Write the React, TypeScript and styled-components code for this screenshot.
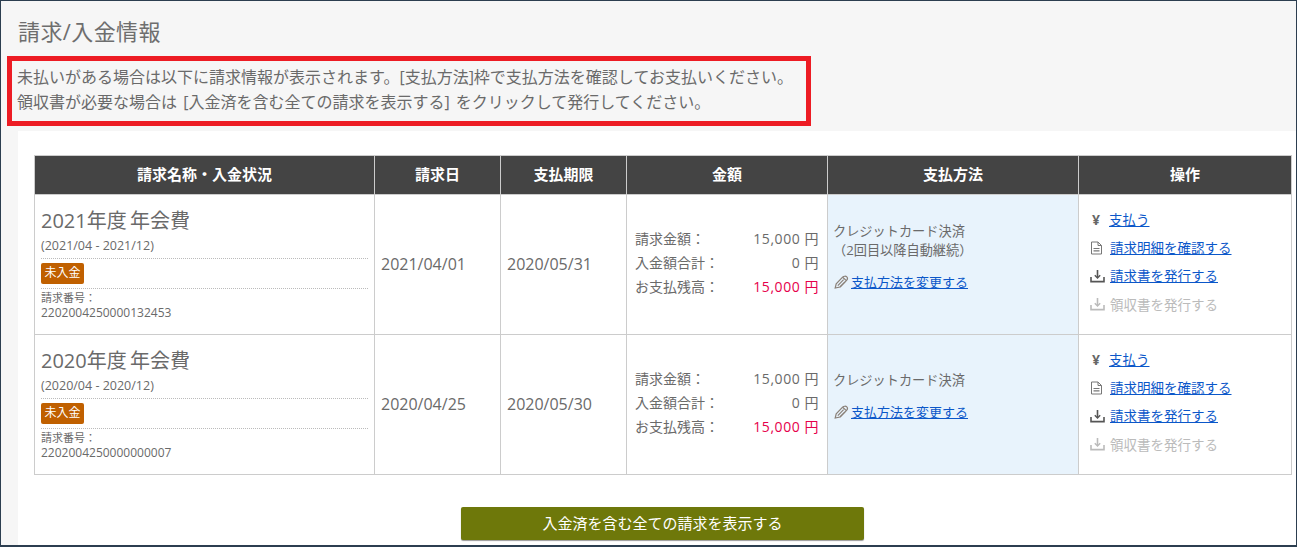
import React from "react";
import styled, { createGlobalStyle } from "styled-components";

const Global = createGlobalStyle`
  html, body { margin: 0; padding: 0; background: #f6f6f6; }
  body { font-family: "Open Sans", "Noto Sans CJK JP", sans-serif; color: #666; overflow: hidden; }
  * { box-sizing: border-box; }
`;

const Frame = styled.div`
  width: 1297px;
  height: 547px;
  border: 1px solid #2c3e50;
  border-bottom-width: 2px;
  background: #f6f6f6;
  overflow: hidden;
`;
const Title = styled.h1`
  margin: 0;
  padding: 15px 0 0 17px;
  height: 55px;
  font-size: 22px;
  line-height: 30px;
  letter-spacing: 0.4px;
  font-weight: 400;
  color: #6e6e6e;
`;
const Notice = styled.div`
  margin-left: 6px;
  width: 804px;
  height: 70px;
  border: 5px solid #ed1c24;
  padding: 4px 5px;
  font-size: 16px;
  line-height: 25px;
  word-spacing: 2px;
  color: #6a6a6a;
  white-space: nowrap;
`;
const Panel = styled.main`
  margin: 5px 0 0 17px;
  background: #fff;
  padding: 24px 4px 0 16px;
  height: 420px;
`;
const Table = styled.table`
  width: 1258px;
  table-layout: fixed;
  border-collapse: collapse;
  font-size: 16px;
`;
const Th = styled.th<{ $w: number }>`
  width: ${(p) => p.$w}px;
  height: 39px;
  background: #444;
  color: #fff;
  font-weight: 700;
  font-size: 15px;
  line-height: 35px;
  border: 1px solid #ccc;
  padding: 0 0 1px;
  text-align: center;
`;
const Td = styled.td<{ $blue?: boolean; $raised?: boolean }>`
  height: 140px;
  border: 1px solid #ccc;
  padding: 0 6px ${(p) => (p.$raised ? "2px" : "0")};
  vertical-align: middle;
  background: ${(p) => (p.$blue ? "#e8f3fc" : "#fff")};
  color: #6a6a6a;
`;
const BillName = styled.div`
  font-size: 20px;
  line-height: 26px;
  word-spacing: -2px;
`;
const Period = styled.div`
  font-size: 12.5px;
  line-height: 16px;
  margin-top: 4px;
  padding-bottom: 4px;
  border-bottom: 1px dotted #bbb;
`;
const StatusRow = styled.div`
  padding: 4px 0;
  line-height: 0;
  border-bottom: 1px dotted #bbb;
`;
const Badge = styled.span`
  display: inline-block;
  width: 43px;
  height: 21px;
  background: #c06000;
  color: #fff;
  font-size: 12px;
  line-height: 20px;
  text-align: center;
  border-radius: 2px;
`;
const BillNo = styled.div`
  font-size: 11px;
  line-height: 15px;
  margin-top: 1px;
`;
const BillNumber = styled.span`
  font-size: 12px;
`;
const Amounts = styled.dl`
  margin: 0;
  padding: 0 2px 4px;
  display: grid;
  grid-template-columns: 1fr auto;
  line-height: 24px;
  font-size: 14px;
`;
const Label = styled.dt`
  margin: 0;
`;
const Value = styled.dd<{ $due?: boolean }>`
  margin: 0;
  text-align: right;
  letter-spacing: 0.55px;
  color: ${(p) => (p.$due ? "#e6004c" : "#6a6a6a")};
`;
const Method = styled.div`
  margin-left: -1px;
  font-size: 13.2px;
  line-height: 19px;
`;
const MethodCell = styled.div`
  padding-bottom: 16px;
`;
const ChangeRow = styled.div`
  display: flex;
  align-items: center;
  gap: 2px;
  margin-top: 12px;
  font-size: 13px;
`;
const Link = styled.a`
  color: #0b57c9;
  text-decoration: underline;
  font-size: 13px;
  line-height: 20px;
`;
const OpLink = styled(Link)`
  font-size: 13.5px;
`;
const Ops = styled.ul`
  list-style: none;
  margin: 0;
  padding: 0 0 6px 5px;
  display: flex;
  flex-direction: column;
  gap: 8px;
`;
const Op = styled.li<{ $off?: boolean }>`
  display: flex;
  align-items: center;
  height: 20px;
  font-size: 13.5px;
  color: ${(p) => (p.$off ? "#bbb" : "#666")};
`;
const IconBox = styled.span`
  width: 20px;
  display: flex;
  align-items: center;
  justify-content: flex-start;
  flex: none;
`;
const Yen = styled.span`
  width: 19px;
  padding-left: 2px;
  flex: none;
  font-size: 14px;
  font-weight: 700;
`;
const Actions = styled.div`
  display: flex;
  justify-content: center;
  padding: 32px 1px 0 0;
`;
const Button = styled.button`
  width: 403px;
  height: 33px;
  padding: 0 0 2px;
  background: #6e780a;
  color: #fff;
  border: none;
  border-radius: 2px;
  box-shadow: 0 1px 1px rgba(0, 0, 0, 0.4);
  font-family: inherit;
  font-size: 15px;
`;

const Pencil = () => (
  <svg width="15" height="14" viewBox="0 0 15 14" fill="none" stroke="#8a8078" strokeWidth="1.2">
    <path d="M1.2 13 L2.2 8.8 L8.6 2.2 C9.8 1 11.8 0.9 12.8 1.9 C13.8 3 13.4 4.6 12.4 5.6 L6 12 Z" />
    <path d="M3.8 10.6 L9.6 4.6 M6 12 L11 6.8 M8.6 2.2 L12.4 5.6" />
  </svg>
);
const Doc = () => (
  <svg width="13" height="14" viewBox="0 0 13 14" fill="none" stroke="#777" strokeWidth="1">
    <path d="M1.5 1 H8 L11.5 4.5 V13 H1.5 Z" />
    <path d="M8 1 V4.5 H11.5" />
    <path d="M3.5 7.5 H9.5 M3.5 9.8 H9.5" strokeWidth="1.2" />
  </svg>
);
const Download = ({ off }: { off?: boolean }) => {
  const c = off ? "#bbb" : "#555";
  return (
    <svg width="15" height="14" viewBox="0 0 15 14" fill="none" stroke={c} strokeWidth="1.6">
      <path d="M1 8 V12.6 H14 V8" />
      <path d="M7.5 1 V8.5" />
      <path d="M4.8 6.2 L7.5 9 L10.2 6.2" strokeWidth="1.4" />
    </svg>
  );
};

type Bill = { name: string; period: string; no: string; date: string; due: string; auto: boolean };
const bills: Bill[] = [
  { name: "2021年度 年会費", period: "(2021/04 - 2021/12)", no: "2202004250000132453", date: "2021/04/01", due: "2020/05/31", auto: true },
  { name: "2020年度 年会費", period: "(2020/04 - 2020/12)", no: "2202004250000000007", date: "2020/04/25", due: "2020/05/30", auto: false },
];

export default function App() {
  return (
    <Frame>
      <Global />
      <Title>請求/入金情報</Title>
      <Notice>
        未払いがある場合は以下に請求情報が表示されます。[支払方法]枠で支払方法を確認してお支払いください。
        <br />
        領収書が必要な場合は [入金済を含む全ての請求を表示する] をクリックして発行してください。
      </Notice>
      <Panel>
        <Table>
          <thead>
            <tr>
              <Th $w={340}>請求名称・入金状況</Th>
              <Th $w={126}>請求日</Th>
              <Th $w={126}>支払期限</Th>
              <Th $w={201}>金額</Th>
              <Th $w={251}>支払方法</Th>
              <Th $w={213}>操作</Th>
            </tr>
          </thead>
          <tbody>
            {bills.map((b) => (
              <tr key={b.no}>
                <Td $raised>
                  <BillName>{b.name}</BillName>
                  <Period>{b.period}</Period>
                  <StatusRow>
                    <Badge>未入金</Badge>
                  </StatusRow>
                  <BillNo>
                    請求番号：
                    <br />
                    <BillNumber>{b.no}</BillNumber>
                  </BillNo>
                </Td>
                <Td $raised>{b.date}</Td>
                <Td $raised>{b.due}</Td>
                <Td>
                  <Amounts>
                    <Label>請求金額：</Label>
                    <Value>15,000 円</Value>
                    <Label>入金額合計：</Label>
                    <Value>0 円</Value>
                    <Label>お支払残高：</Label>
                    <Value $due>15,000 円</Value>
                  </Amounts>
                </Td>
                <Td $blue>
                  <MethodCell>
                    <Method>
                      クレジットカード決済
                      {b.auto && (
                        <>
                          <br />
                          （2回目以降自動継続）
                        </>
                      )}
                    </Method>
                    <ChangeRow>
                      <Pencil />
                      <Link href="#">支払方法を変更する</Link>
                    </ChangeRow>
                  </MethodCell>
                </Td>
                <Td>
                  <Ops>
                    <Op>
                      <Yen>¥</Yen>
                      <OpLink href="#">支払う</OpLink>
                    </Op>
                    <Op>
                      <IconBox>
                        <Doc />
                      </IconBox>
                      <OpLink href="#">請求明細を確認する</OpLink>
                    </Op>
                    <Op>
                      <IconBox>
                        <Download />
                      </IconBox>
                      <OpLink href="#">請求書を発行する</OpLink>
                    </Op>
                    <Op $off>
                      <IconBox>
                        <Download off />
                      </IconBox>
                      領収書を発行する
                    </Op>
                  </Ops>
                </Td>
              </tr>
            ))}
          </tbody>
        </Table>
        <Actions>
          <Button>入金済を含む全ての請求を表示する</Button>
        </Actions>
      </Panel>
    </Frame>
  );
}
